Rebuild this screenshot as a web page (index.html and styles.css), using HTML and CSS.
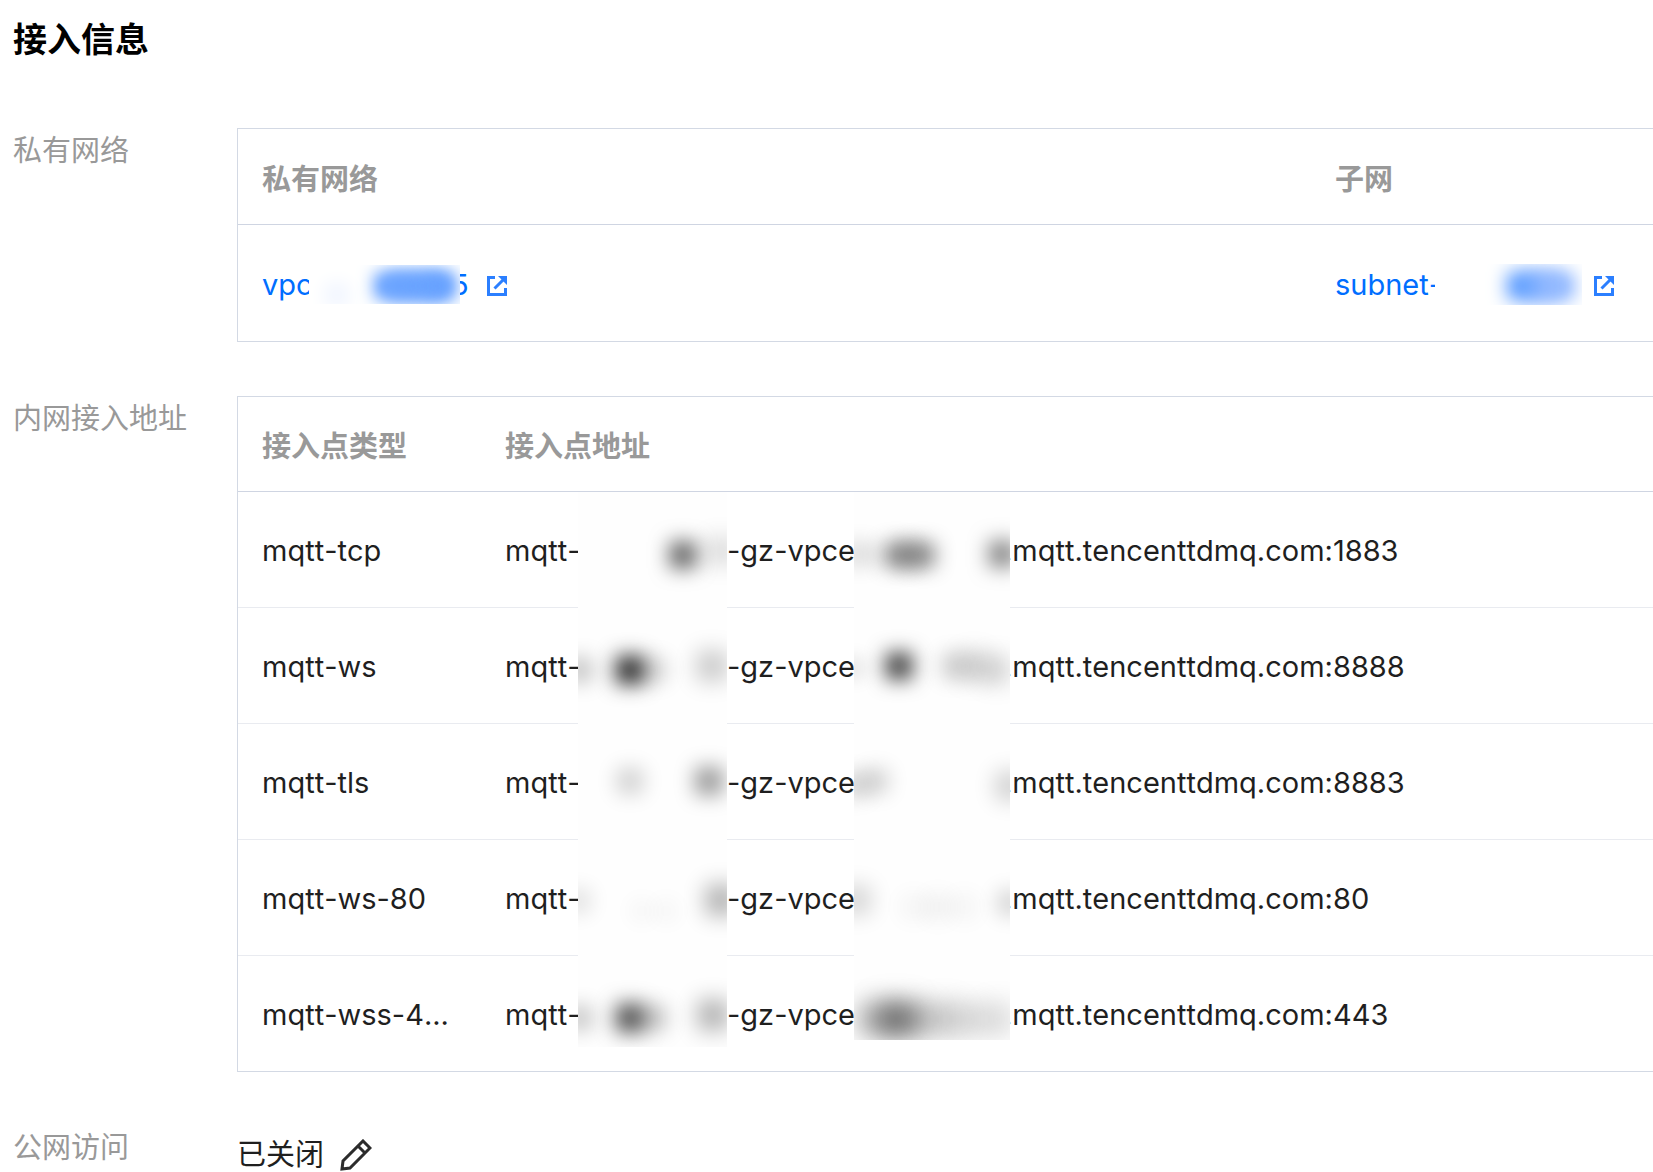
FILE: index.html
```html
<!doctype html>

<html lang="zh-CN">
<head>
    <meta charset="utf-8">
    <meta name="viewport" content="width=device-width, initial-scale=1">

    <title>接入信息</title>
    <link rel="stylesheet" href="styles.css">
</head>

<body>
    <h1>接入信息</h1>

    <section class="item">
        <h2 class="label">私有网络</h2>
        <table class="network">
            <thead>
                <tr><th class="vpc">私有网络</th><th>子网</th></tr>
            </thead>
            <tbody>
                <tr>
                    <td>
                        <a href="#vpc"><span class="vpc-start">vpc</span><span class="mask mask-vpc"></span><span class="tail">5</span>
                            <svg class="jump" viewBox="0 0 20 20"><path d="M8 1.5H1.5v17h17V12M7.500 12.500L17 3"/><path class="fill" d="M11 0h9v9z"/></svg></a>
                    </td>
                    <td>
                        <a href="#subnet"><span class="subnet-start">subnet-</span><span class="mask mask-subnet"></span>
                            <svg class="jump" viewBox="0 0 20 20"><path d="M8 1.5H1.5v17h17V12M7.500 12.500L17 3"/><path class="fill" d="M11 0h9v9z"/></svg></a>
                    </td>
                </tr>
            </tbody>
        </table>
    </section>

    <section class="item">
        <h2 class="label">内网接入地址</h2>
        <table class="endpoints">
            <thead>
                <tr><th class="type">接入点类型</th><th>接入点地址</th></tr>
            </thead>
            <tbody>
                <tr>
                    <td>mqtt-tcp</td>
                    <td class="address-cell"><div class="address"><span class="host">mqtt-</span><span class="mask id tcp"></span><span class="zone">-gz-vpce</span><span class="mask net tcp"></span><span class="domain">.mqtt.tencenttdmq.com:1883</span></div></td>
                </tr>
                <tr>
                    <td>mqtt-ws</td>
                    <td class="address-cell"><div class="address"><span class="host">mqtt-</span><span class="mask id ws"></span><span class="zone">-gz-vpce</span><span class="mask net ws"></span><span class="domain">.mqtt.tencenttdmq.com:8888</span></div></td>
                </tr>
                <tr>
                    <td>mqtt-tls</td>
                    <td class="address-cell"><div class="address"><span class="host">mqtt-</span><span class="mask id tls"></span><span class="zone">-gz-vpce</span><span class="mask net tls"></span><span class="domain">.mqtt.tencenttdmq.com:8883</span></div></td>
                </tr>
                <tr>
                    <td>mqtt-ws-80</td>
                    <td class="address-cell"><div class="address"><span class="host">mqtt-</span><span class="mask id ws80"></span><span class="zone">-gz-vpce</span><span class="mask net ws80"></span><span class="domain">.mqtt.tencenttdmq.com:80</span></div></td>
                </tr>
                <tr>
                    <td>mqtt-wss-4...</td>
                    <td class="address-cell"><div class="address"><span class="host">mqtt-</span><span class="mask id wss"></span><span class="zone">-gz-vpce</span><span class="mask net wss"></span><span class="domain">.mqtt.tencenttdmq.com:443</span></div></td>
                </tr>
            </tbody>
        </table>
    </section>

    <section class="item">
        <h2 class="label">公网访问</h2>
        <div class="public">
            <span>已关闭</span>
            <button type="button" aria-label="编辑">
                <svg viewBox="0 0 32 32"><path d="M2 30l1-8L23 2l7 7-20 20zM18 7l7 7"/></svg>
            </button>
        </div>
    </section>
</body>
</html>
```

FILE: styles.css
```css
body {
    margin: 0;
    padding: 16px 0 0 13px;
    background: #fff;
    color: #1f1f1f;
    font-family: Inter, "Noto Sans CJK SC", sans-serif;
    font-size: 29px;
    font-kerning: none;
    overflow-x: hidden;
}
h1 {
    margin: 0 0 64px;
    color: #000;
    font-size: 34px;
    line-height: 48px;
    font-weight: 600;
}
.item { display: flex; margin-bottom: 54px; }
.item:last-child { margin-bottom: 0; }
.label {
    flex: 0 0 224px;
    margin: 0;
    color: #999;
    font-size: 29px;
    font-weight: 400;
    line-height: 46px;
}
.item:last-child .label { line-height: 44px; }

table {
    flex: 1;
    table-layout: fixed;
    border: 1px solid #d3d9e4;
    border-right: 0;
    border-spacing: 0;
}
th {
    height: 95px;
    padding: 0 24px;
    border-bottom: 1px solid #cfd5e2;
    color: #999;
    font-weight: 600;
    text-align: left;
}
td {
    height: 113px;
    padding: 2px 24px 0;
    border-bottom: 1px solid #e9ebf0;
    white-space: nowrap;
}
tbody tr:last-child td { border-bottom: 0; }
.vpc { width: 1025px; }
.type { width: 195px; }
.network td { height: 114px; }
.endpoints th { height: 94px; }

a {
    display: flex;
    align-items: center;
    color: #006eff;
    text-decoration: none;
}
.vpc-start { width: 47px; }
.subnet-start { width: 100px; }
.tail { margin-left: -9px; }
.jump { width: 20px; height: 20px; margin: 4px 0 0 18px; }
.mask-subnet + .jump { margin-left: 12px; }
.jump path { fill: none; stroke: #2b7fff; stroke-width: 3; }
.jump .fill { fill: #2b7fff; stroke: none; }

/* blurred-out parts of the ids, each smudge is one shadow of ::before */
.mask {
    position: relative;
    z-index: 1;
    flex: none;
    overflow: hidden;
    background: #fff;
}
.mask::before {
    content: "";
    display: block;
    width: 0;
    height: 0;
}
.mask-vpc { width: 151px; height: 39px; }
.mask-vpc::before {
    box-shadow:
        78px 21px 16px 13px #66a1ff,
        90px 21px 16px 13px #66a1ff,
        102px 21px 16px 13px #66a1ff,
        114px 21px 16px 13px #66a1ff,
        126px 21px 16px 13px #66a1ff,
        134px 21px 16px 13px #66a1ff,
        28px 30px 18px 12px #f0f5ff;
}
.mask-subnet { width: 147px; height: 41px; }
.mask-subnet::before {
    box-shadow:
        86px 22px 18px 14px #5a9bff,
        102px 22px 18px 13px #8cb5ff,
        114px 22px 18px 13px #8cb5ff,
        126px 22px 18px 13px #8cb5ff;
}

.address-cell { height: 115px; padding: 0 24px; }
.address { display: flex; align-items: center; height: 115px; }
.host, .zone, .domain { padding-top: 2px; }
.host { width: 73px; }
.zone { width: 127px; }
.domain { margin-left: -6px; }
.id, .net { height: 117px; margin-bottom: -1px; background: #fefefe; }
.id { width: 149px; }
.net { width: 156px; }

.id.tcp::before {
    box-shadow:
        105px 63px 20px 13px rgb(0 0 0 / 0.65),
        143px 59px 22px 14px rgb(0 0 0 / 0.15);
}
.net.tcp::before {
    box-shadow:
        42px 63px 20px 12px rgb(0 0 0 / 0.45),
        55px 63px 20px 12px rgb(0 0 0 / 0.32),
        69px 63px 20px 12px rgb(0 0 0 / 0.45),
        6px 62px 20px 12px rgb(0 0 0 / 0.16),
        148px 62px 20px 13px rgb(0 0 0 / 0.5);
}
.id.ws::before {
    box-shadow:
        52px 62px 20px 14px rgb(0 0 0 / 0.86),
        76px 62px 20px 12px rgb(0 0 0 / 0.18),
        2px 62px 20px 12px rgb(0 0 0 / 0.25),
        134px 58px 22px 15px rgb(0 0 0 / 0.22);
}
.net.ws::before {
    box-shadow:
        45px 58px 20px 13px rgb(0 0 0 / 0.8),
        100px 58px 20px 13px rgb(0 0 0 / 0.18),
        120px 58px 22px 14px rgb(0 0 0 / 0.18),
        142px 62px 22px 14px rgb(0 0 0 / 0.17),
        0 60px 18px 10px rgb(0 0 0 / 0.12);
}
.id.tls::before {
    box-shadow:
        52px 57px 20px 13px rgb(0 0 0 / 0.18),
        131px 57px 20px 14px rgb(0 0 0 / 0.4);
}
.net.tls::before {
    box-shadow:
        22px 57px 20px 12px rgb(0 0 0 / 0.18),
        2px 61px 20px 12px rgb(0 0 0 / 0.18),
        156px 62px 22px 14px rgb(0 0 0 / 0.2);
}
.id.ws80::before {
    box-shadow:
        143px 60px 22px 15px rgb(0 0 0 / 0.32),
        0 61px 20px 12px rgb(0 0 0 / 0.12),
        64px 71px 20px 11px rgb(0 0 0 / 0.04),
        88px 71px 20px 11px rgb(0 0 0 / 0.04);
}
.net.ws80::before {
    box-shadow:
        2px 60px 22px 14px rgb(0 0 0 / 0.18),
        60px 67px 22px 12px rgb(0 0 0 / 0.05),
        84px 67px 22px 12px rgb(0 0 0 / 0.07),
        110px 67px 22px 12px rgb(0 0 0 / 0.05),
        156px 63px 20px 12px rgb(0 0 0 / 0.18);
}
.id.wss {
    height: 91px;
    margin: 0;
    align-self: flex-start;
}
.id.wss::before {
    box-shadow:
        52px 62px 20px 14px rgb(0 0 0 / 0.7),
        76px 62px 20px 12px rgb(0 0 0 / 0.25),
        2px 62px 20px 12px rgb(0 0 0 / 0.24),
        135px 59px 22px 15px rgb(0 0 0 / 0.32);
}
.net.wss {
    height: 84px;
    align-self: flex-start;
}
.net.wss::before {
    box-shadow:
        42px 63px 24px 17px rgb(0 0 0 / 0.52),
        20px 63px 24px 16px rgb(0 0 0 / 0.3),
        62px 63px 24px 16px rgb(0 0 0 / 0.28),
        90px 63px 26px 16px rgb(0 0 0 / 0.22),
        116px 63px 26px 16px rgb(0 0 0 / 0.14),
        144px 63px 26px 16px rgb(0 0 0 / 0.14);
}

.public {
    display: flex;
    align-items: center;
    gap: 16px;
    height: 32px;
    margin-top: 13px;
    line-height: 32px;
}
button {
    width: 32px;
    height: 32px;
    padding: 0;
    border: 0;
    background: none;
    cursor: pointer;
}
button svg { display: block; }
button path { fill: none; stroke: #2c2c2c; stroke-width: 3; }
```
